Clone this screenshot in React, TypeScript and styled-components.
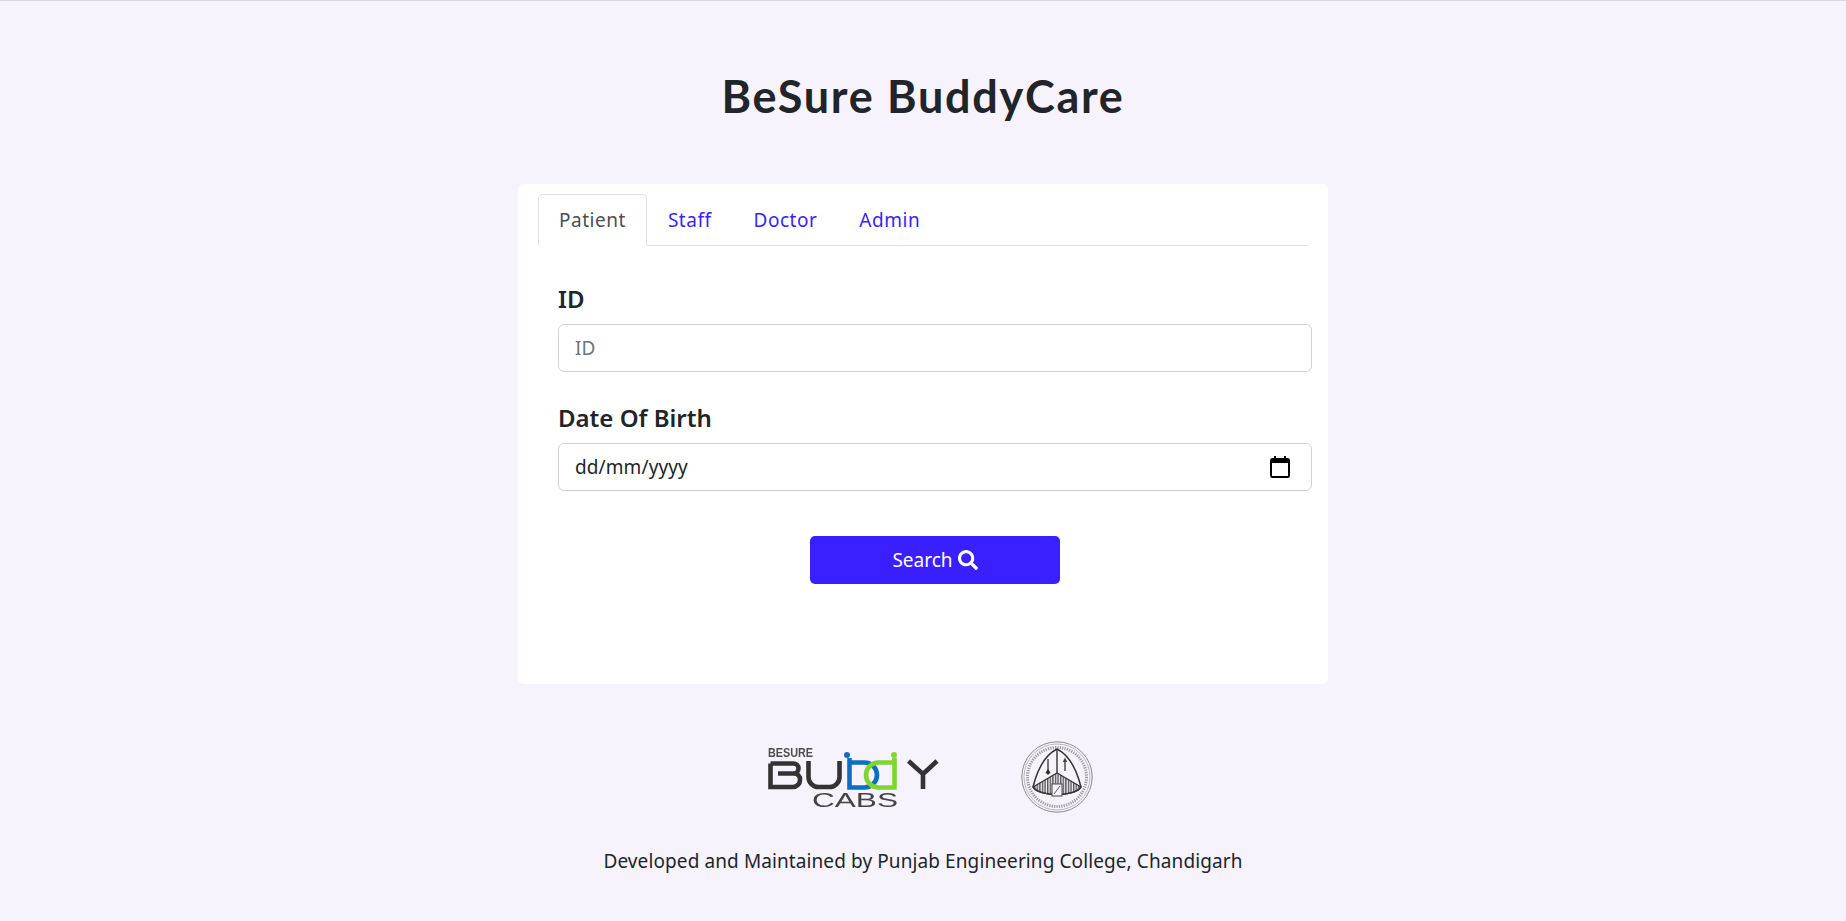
import React from "react";
import styled, { createGlobalStyle } from "styled-components";
import { FaSearch } from "react-icons/fa";

const Global = createGlobalStyle`
  html, body { margin: 0; padding: 0; background: #f6f3fd; }
  body { font-family: "Noto Sans", "Open Sans", sans-serif; color: #212529; }
`;

const Page = styled.div`
  min-height: 921px;
  box-sizing: border-box;
  border-top: 1px solid #d8d8dc;
  display: flex;
  flex-direction: column;
  align-items: center;
`;

const Title = styled.h1`
  margin: 68px 0 0;
  height: 54px;
  line-height: 54px;
  font-family: "Lato", sans-serif;
  font-size: 45px;
  font-weight: 700;
  letter-spacing: 1.7px;
  color: #212529;
`;

const Card = styled.main`
  margin-top: 61px;
  width: 810px;
  height: 500px;
  box-sizing: border-box;
  background: #fff;
  border-radius: 6px;
  padding: 10px 20px;
`;

const Tabs = styled.nav`
  display: flex;
  height: 52px;
  box-sizing: border-box;
  border-bottom: 1px solid #dee2e6;
`;

const Tab = styled.a<{ $active?: boolean }>`
  box-sizing: border-box;
  height: 52px;
  padding: 0 20px;
  line-height: 50px;
  font-size: 19px;
  letter-spacing: 0.52px;
  color: ${(p) => (p.$active ? "#495057" : "#3a1fff")};
  background: ${(p) => (p.$active ? "#fff" : "transparent")};
  border: 1px solid ${(p) => (p.$active ? "#dee2e6" : "transparent")};
  border-bottom-color: ${(p) => (p.$active ? "#fff" : "transparent")};
  border-radius: 5px 5px 0 0;
`;

const Form = styled.form`
  width: 754px;
  padding: 38px 0 0 20px;
  display: flex;
  flex-direction: column;
`;

const Label = styled.label`
  font-size: 24px;
  font-weight: 600;
  line-height: 30px;
  color: #212529;
  margin-bottom: 10px;
`;

const Field = styled.input`
  box-sizing: border-box;
  width: 754px;
  height: 48px;
  padding: 0 16px;
  margin-bottom: 31px;
  font: 19px "Noto Sans", sans-serif;
  color: #212529;
  background: #fff;
  border: 1px solid #ced4da;
  border-radius: 6px;
  outline: none;
  &::placeholder { color: #6c757d; }
`;

const DateField = styled.div`
  box-sizing: border-box;
  width: 754px;
  height: 48px;
  padding: 0 21px 0 16px;
  margin-bottom: 31px;
  display: flex;
  align-items: center;
  justify-content: space-between;
  font-size: 19px;
  letter-spacing: 0.1px;
  color: #212529;
  background: #fff;
  border: 1px solid #ced4da;
  border-radius: 6px;
`;

const Submit = styled.button`
  align-self: center;
  width: 250px;
  height: 48px;
  margin-top: 14px;
  border: none;
  border-radius: 5px;
  background: #3a1fff;
  color: #fff;
  font: 19px "Noto Sans", sans-serif;
  display: flex;
  align-items: center;
  justify-content: center;
  gap: 5px;
`;

const Logos = styled.div`
  margin-top: 54px;
  padding-left: 14px;
  display: flex;
  align-items: center;
  gap: 81px;
  height: 78px;
`;

const Footer = styled.footer`
  margin-top: 31px;
  font-size: 19px;
  letter-spacing: 0.1px;
  line-height: 28px;
  color: #212529;
`;

const CalendarIcon = () => (
  <svg width="20" height="22" viewBox="0 0 20 22" fill="none">
    <path d="M4 0h2v3H4zM14 0h2v3h-2z" fill="#000" />
    <rect x="1" y="3" width="18" height="18" rx="1.5" stroke="#000" strokeWidth="2" />
    <rect x="1" y="3" width="18" height="4" fill="#000" />
  </svg>
);

const BuddyLogo = () => (
  <svg width="173" height="66" viewBox="0 0 173 66" style={{ filter: "blur(0.4px)" }}>
    <text x="1" y="12.5" fontFamily="Liberation Sans" fontWeight="700" fontSize="12" fill="#4d4d4d" textLength="45" lengthAdjust="spacingAndGlyphs">BESURE</text>
    <g fill="none" stroke="#333" strokeWidth="4.6">
      <path d="M3.5 19.5h23a5 5 0 0 1 5 5v0a5 5 0 0 1-5 5H11M26.5 29.5a6 6 0 0 1 6.5 6.5v0a7 7 0 0 1-7 7H3.5V19.500" />
      <path d="M41.500 17v16a10 10 0 0 0 10 10h11a10 10 0 0 0 10-10V17" />
      <path d="M141.500 17l14.500 13v15M170 17l-14 13" />
    </g>
    <path d="M82.500 14v29.500h15a12.500 12.500 0 0 0 0-25h-15" fill="none" stroke="#0d6fc4" strokeWidth="4.6" />
    <path d="M127.500 14v29.500h-16a12.500 12.500 0 0 1 0-25h16" fill="none" stroke="#7ed62e" strokeWidth="4.6" />
    <circle cx="80" cy="11" r="3" fill="#0d6fc4" />
    <circle cx="127" cy="11" r="3" fill="#7ed62e" />
    <text x="45" y="63" fontFamily="Liberation Sans" fontSize="20" fill="#444" textLength="86" lengthAdjust="spacingAndGlyphs">CABS</text>
  </svg>
);

const CollegeSeal = () => (
  <svg width="72" height="72" viewBox="0 0 72 72" style={{ filter: "blur(0.5px)" }}>
    <defs>
      <pattern id="hatch" width="2.6" height="4" patternUnits="userSpaceOnUse">
        <rect width="1.4" height="4" fill="#555" />
      </pattern>
    </defs>
    <circle cx="36" cy="36" r="35.2" fill="none" stroke="#8a8a8a" strokeWidth="1" />
    <circle cx="36" cy="36" r="33" fill="none" stroke="#aaa" strokeWidth="0.8" />
    <circle cx="36" cy="36" r="29.5" fill="none" stroke="#999" strokeWidth="3" strokeDasharray="1.2 1.2" />
    <path d="M36 8C24 14 16 30 12 46c6 10 42 10 48 0C56 30 48 14 36 8z" fill="#f6f3fd" stroke="#333" strokeWidth="1.5" />
    <path d="M12 46l24-14l24 14c-6 10-42 10-48 0z" fill="url(#hatch)" stroke="#333" strokeWidth="1.2" />
    <path d="M36 8v24" stroke="#333" strokeWidth="1.4" />
    <rect x="31" y="43" width="10" height="12" fill="#f6f3fd" stroke="#444" strokeWidth="1" />
    <path d="M33 53l6-8" stroke="#555" strokeWidth="1" />
    <path d="M27 18v13M44 30V18M42.5 21l1.5-3l1.5 3" fill="none" stroke="#444" strokeWidth="1.4" />
    <path d="M27 28l2.5 3.5L27 34l-2.5-2.5z" fill="#333" />
  </svg>
);

export default function App() {
  return (
    <>
      <Global />
      <Page>
        <Title>BeSure BuddyCare</Title>
        <Card>
          <Tabs>
            <Tab $active>Patient</Tab>
            <Tab>Staff</Tab>
            <Tab>Doctor</Tab>
            <Tab>Admin</Tab>
          </Tabs>
          <Form>
            <Label>ID</Label>
            <Field placeholder="ID" />
            <Label>Date Of Birth</Label>
            <DateField>
              <span>dd/mm/yyyy</span>
              <CalendarIcon />
            </DateField>
            <Submit type="button">
              Search <FaSearch size={20} />
            </Submit>
          </Form>
        </Card>
        <Logos>
          <BuddyLogo />
          <CollegeSeal />
        </Logos>
        <Footer>Developed and Maintained by Punjab Engineering College, Chandigarh</Footer>
      </Page>
    </>
  );
}
